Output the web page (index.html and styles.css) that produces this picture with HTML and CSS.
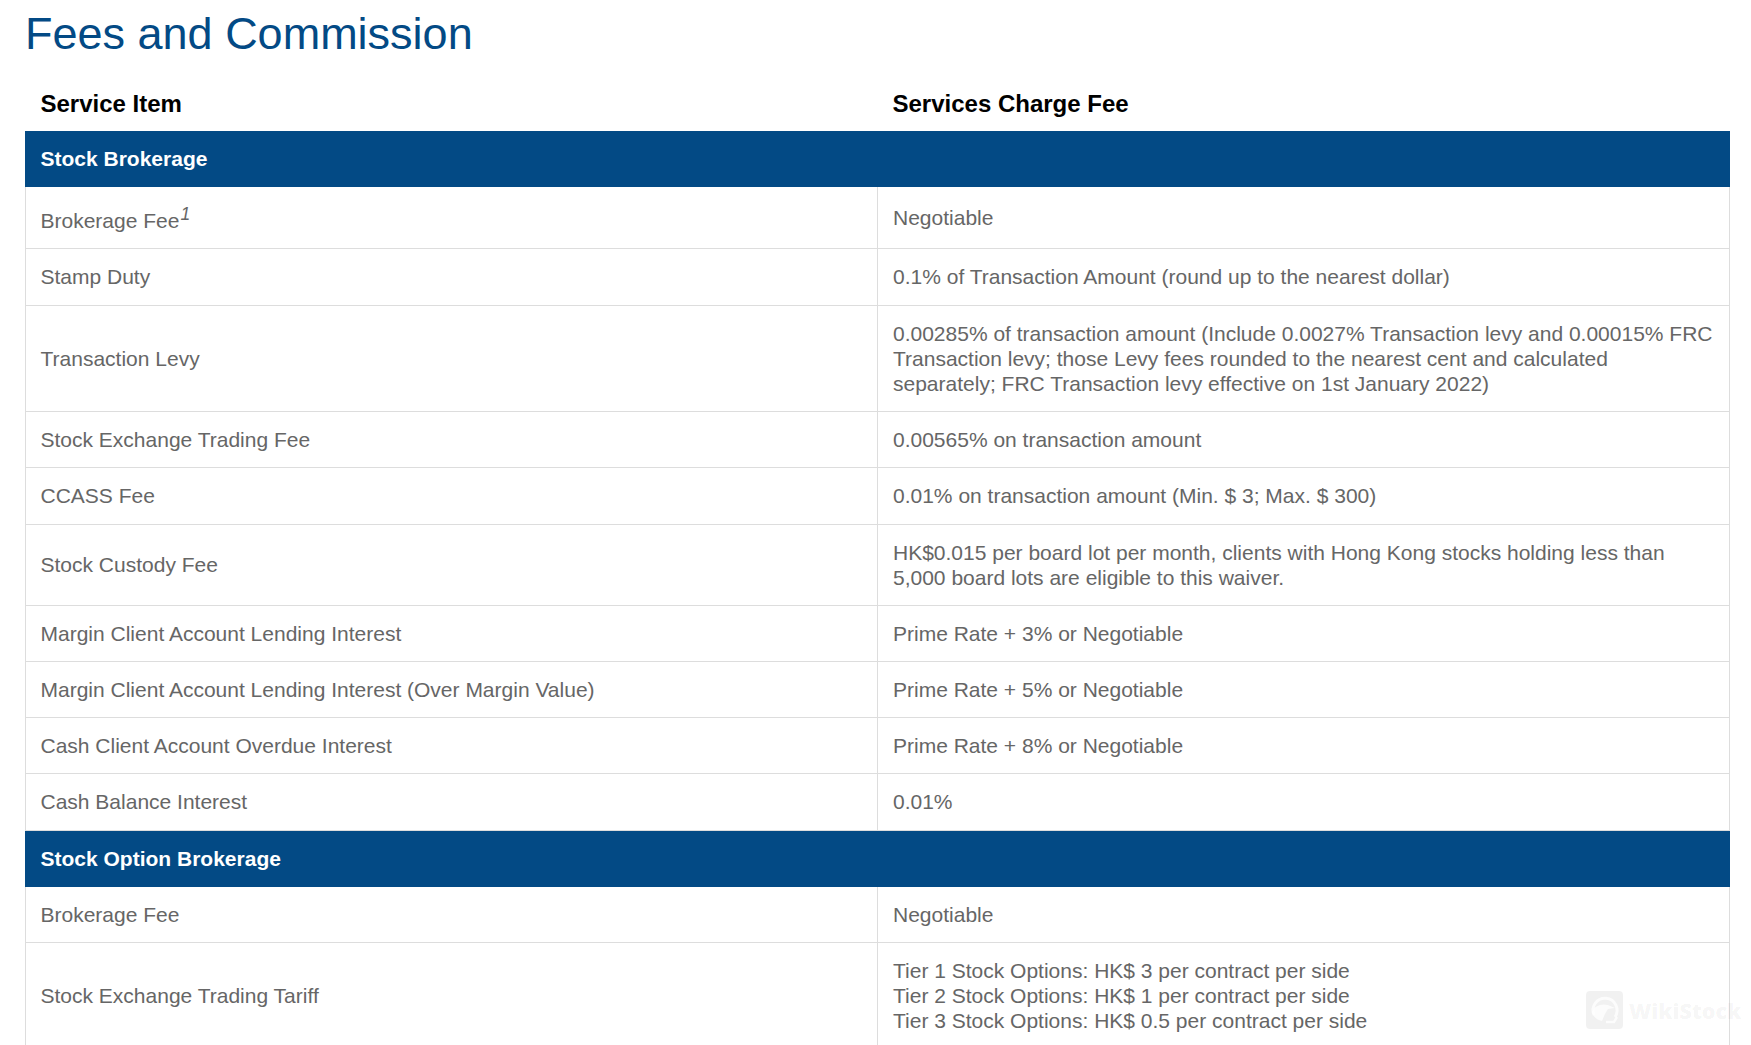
FILE: index.html
```html
<!DOCTYPE html>
<html lang="en">
<head>
<meta charset="utf-8">
<title>Fees and Commission</title>
<link rel="stylesheet" href="styles.css">
</head>
<body>
<main class="page">
<h1 class="title">Fees and Commission</h1>
<table class="fees">
<thead>
<tr><th>Service Item</th><th>Services Charge Fee</th></tr>
</thead>
<tbody>
<tr class="section section-first"><td colspan="2">Stock Brokerage</td></tr>
<tr><td>Brokerage Fee<sup class="note">1</sup></td><td>Negotiable</td></tr>
<tr><td>Stamp Duty</td><td>0.1% of Transaction Amount (round up to the nearest dollar)</td></tr>
<tr><td>Transaction Levy</td><td>0.00285% of transaction amount (Include 0.0027% Transaction levy and 0.00015% FRC Transaction levy; those Levy fees rounded to the nearest cent and calculated separately; FRC Transaction levy effective on 1st January 2022)</td></tr>
<tr><td>Stock Exchange Trading Fee</td><td>0.00565% on transaction amount</td></tr>
<tr><td>CCASS Fee</td><td>0.01% on transaction amount (Min. $ 3; Max. $ 300)</td></tr>
<tr><td>Stock Custody Fee</td><td>HK$0.015 per board lot per month, clients with Hong Kong stocks holding less than 5,000 board lots are eligible to this waiver.</td></tr>
<tr><td>Margin Client Account Lending Interest</td><td>Prime Rate + 3% or Negotiable</td></tr>
<tr><td>Margin Client Account Lending Interest (Over Margin Value)</td><td>Prime Rate + 5% or Negotiable</td></tr>
<tr><td>Cash Client Account Overdue Interest</td><td>Prime Rate + 8% or Negotiable</td></tr>
<tr><td>Cash Balance Interest</td><td>0.01%</td></tr>
<tr class="section"><td colspan="2">Stock Option Brokerage</td></tr>
<tr><td>Brokerage Fee</td><td>Negotiable</td></tr>
<tr><td>Stock Exchange Trading Tariff</td><td>Tier 1 Stock Options: HK$ 3 per contract per side<br>Tier 2 Stock Options: HK$ 1 per contract per side<br>Tier 3 Stock Options: HK$ 0.5 per contract per side</td></tr>
</tbody>
</table>
</main>
<div class="watermark">
<svg class="mark" width="37" height="38" viewBox="0 0 37 38" aria-hidden="true">
<rect width="37" height="38" rx="4" fill="#000" fill-opacity=".055"/>
<path d="M8 24a12 12 0 1 1 21 2" fill="none" stroke="#fff" stroke-opacity=".75" stroke-width="3"/>
<path d="M6 21c2-6 9-9 16-7l7 3-7 1-3 5-3 7c-5-1-9-4-10-9z" fill="#fff" fill-opacity=".75"/>
<path d="M20 31h8l3-5" fill="none" stroke="#fff" stroke-opacity=".75" stroke-width="2.5"/>
</svg>
<span class="wm-text">WikiStock</span>
</div>
</body>
</html>
```
FILE: styles.css
```css
html, body {
  margin: 0;
  padding: 0;
  background: #fff;
}
body {
  height: 1045px;
  overflow: hidden;
  position: relative;
  font-family: "Liberation Sans", Arial, sans-serif;
}
.page {
  padding: 0 21px 0 25px;
}
.title {
  margin: 0;
  padding-top: 8px;
  font-size: 45px;
  line-height: 52px;
  font-weight: 400;
  color: #034a85;
}
.fees {
  width: 100%;
  margin-top: 13px;
  border-collapse: collapse;
  table-layout: fixed;
  font-size: 21px;
  line-height: 1.2;
  color: #666;
}
.fees th {
  padding: 17px 15px 13px;
  text-align: left;
  font-size: 24px;
  line-height: 28px;
  font-weight: 700;
  color: #000;
}
.fees td {
  padding: 15px;
  border: 1px solid #ddd;
  vertical-align: middle;
}
.fees td:first-child {
  padding-left: 14.5px;
}
.section td {
  background: #034a85;
  border-color: #034a85;
  color: #fff;
  font-weight: 700;
}
.section-first td {
  border-top: 0;
}
.note {
  margin-left: 1px;
  font-style: italic;
  line-height: 25.6px;
}
.watermark {
  position: absolute;
  left: 1586px;
  top: 991px;
  display: flex;
  align-items: center;
  gap: 6px;
}
.wm-text {
  font-size: 21.5px;
  font-weight: 800;
  color: rgba(0, 0, 0, .055);
  font-family: "Open Sans", sans-serif;
}
```
